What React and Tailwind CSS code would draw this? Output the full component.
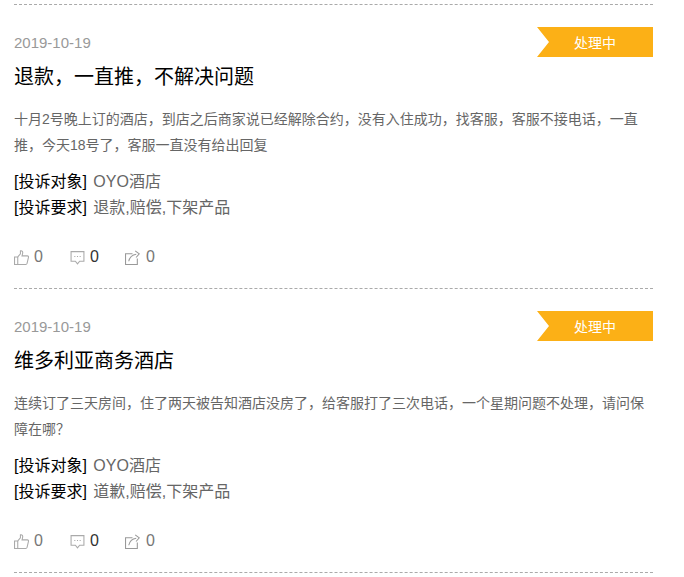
import React from 'react';

const items = [
  {
    title: '退款，一直推，不解决问题',
    desc: '十月2号晚上订的酒店，到店之后商家说已经解除合约，没有入住成功，找客服，客服不接电话，一直推，今天18号了，客服一直没有给出回复',
    demand: '退款,赔偿,下架产品',
  },
  {
    title: '维多利亚商务酒店',
    desc: '连续订了三天房间，住了两天被告知酒店没房了，给客服打了三次电话，一个星期问题不处理，请问保障在哪？',
    demand: '道歉,赔偿,下架产品',
  },
];

const ThumbIcon = () => (
  <svg width="15" height="15" viewBox="0 0 14 14" fill="none" stroke="#aaa" strokeWidth="1">
    <path d="M0.5 6.5h3v7h-3z" />
    <path d="M3.5 6.5l2.5-3V0.8c1.5-0.4 2.5 0.7 2 2.5L7.5 5.5h5c0.8 0 1.2 0.6 1 1.4l-1.3 5.6c-0.2 0.6-0.5 1-1.2 1H3.5" />
  </svg>
);

const CommentIcon = () => (
  <svg width="15" height="15" viewBox="0 0 14 14" fill="none" stroke="#aaa" strokeWidth="1">
    <path d="M1 1.500h12v9H9l-2 2.500-2-2.500H1z" />
    <path d="M4 6h1M6.500 6h1M9 6h1" />
  </svg>
);

const ShareIcon = () => (
  <svg width="15" height="15" viewBox="0 0 14 14" fill="none" stroke="#999" strokeWidth="1">
    <path d="M7 3.500H0.500v10H11.500V8" />
    <path d="M3.500 10.500c0.800-3.500 3.500-6 7-6.500M9.500 0.800l3.800 2.800-3 3.400" />
  </svg>
);

const Item = ({ item }) => (
  <div className="border-b border-dashed border-[#aaa] pt-[22px] pb-[22px] h-[284px]">
    <div className="flex items-center justify-between h-[30px]">
      <span className="text-[15px] leading-[30px] pt-[2px] text-[#999]">2019-10-19</span>
      <span className="h-[30px] w-[116px] bg-[#fcb016] text-white text-[14px] leading-[32px] text-center [clip-path:polygon(0_0,100%_0,100%_100%,0_100%,12px_50%)]">
        处理中
      </span>
    </div>
    <h3 className="text-[20px] leading-[36px] text-black font-normal mt-[2px]">{item.title}</h3>
    <p className="text-[14px] leading-[26px] text-[#666] mt-[11px]">{item.desc}</p>
    <div className="mt-[11px] text-[16px] leading-[26px] text-[#666]">
      <div><span className="text-black mr-[2px]">[投诉对象]</span> OYO酒店</div>
      <div><span className="text-black mr-[2px]">[投诉要求]</span> {item.demand}</div>
    </div>
    <div className="flex items-center mt-[26px] text-[16px] text-[#777] h-[20px]">
      <span className="flex items-center gap-[5px] w-[56px]"><ThumbIcon /> 0</span>
      <span className="flex items-center gap-[5px] w-[55px] text-[#333]"><CommentIcon /> 0</span>
      <span className="flex items-center gap-[6px]"><ShareIcon /> 0</span>
    </div>
  </div>
);

export default function App() {
  return (
    <div className="w-[684px] h-[577px] overflow-hidden bg-white font-['Liberation_Sans','Noto_Sans_CJK_SC',sans-serif]">
      <div className="ml-[14px] w-[639px]">
        <div className="h-[5px] border-b border-dashed border-[#aaa]" />
        {items.map((item) => (
          <Item key={item.title} item={item} />
        ))}
      </div>
    </div>
  );
}
